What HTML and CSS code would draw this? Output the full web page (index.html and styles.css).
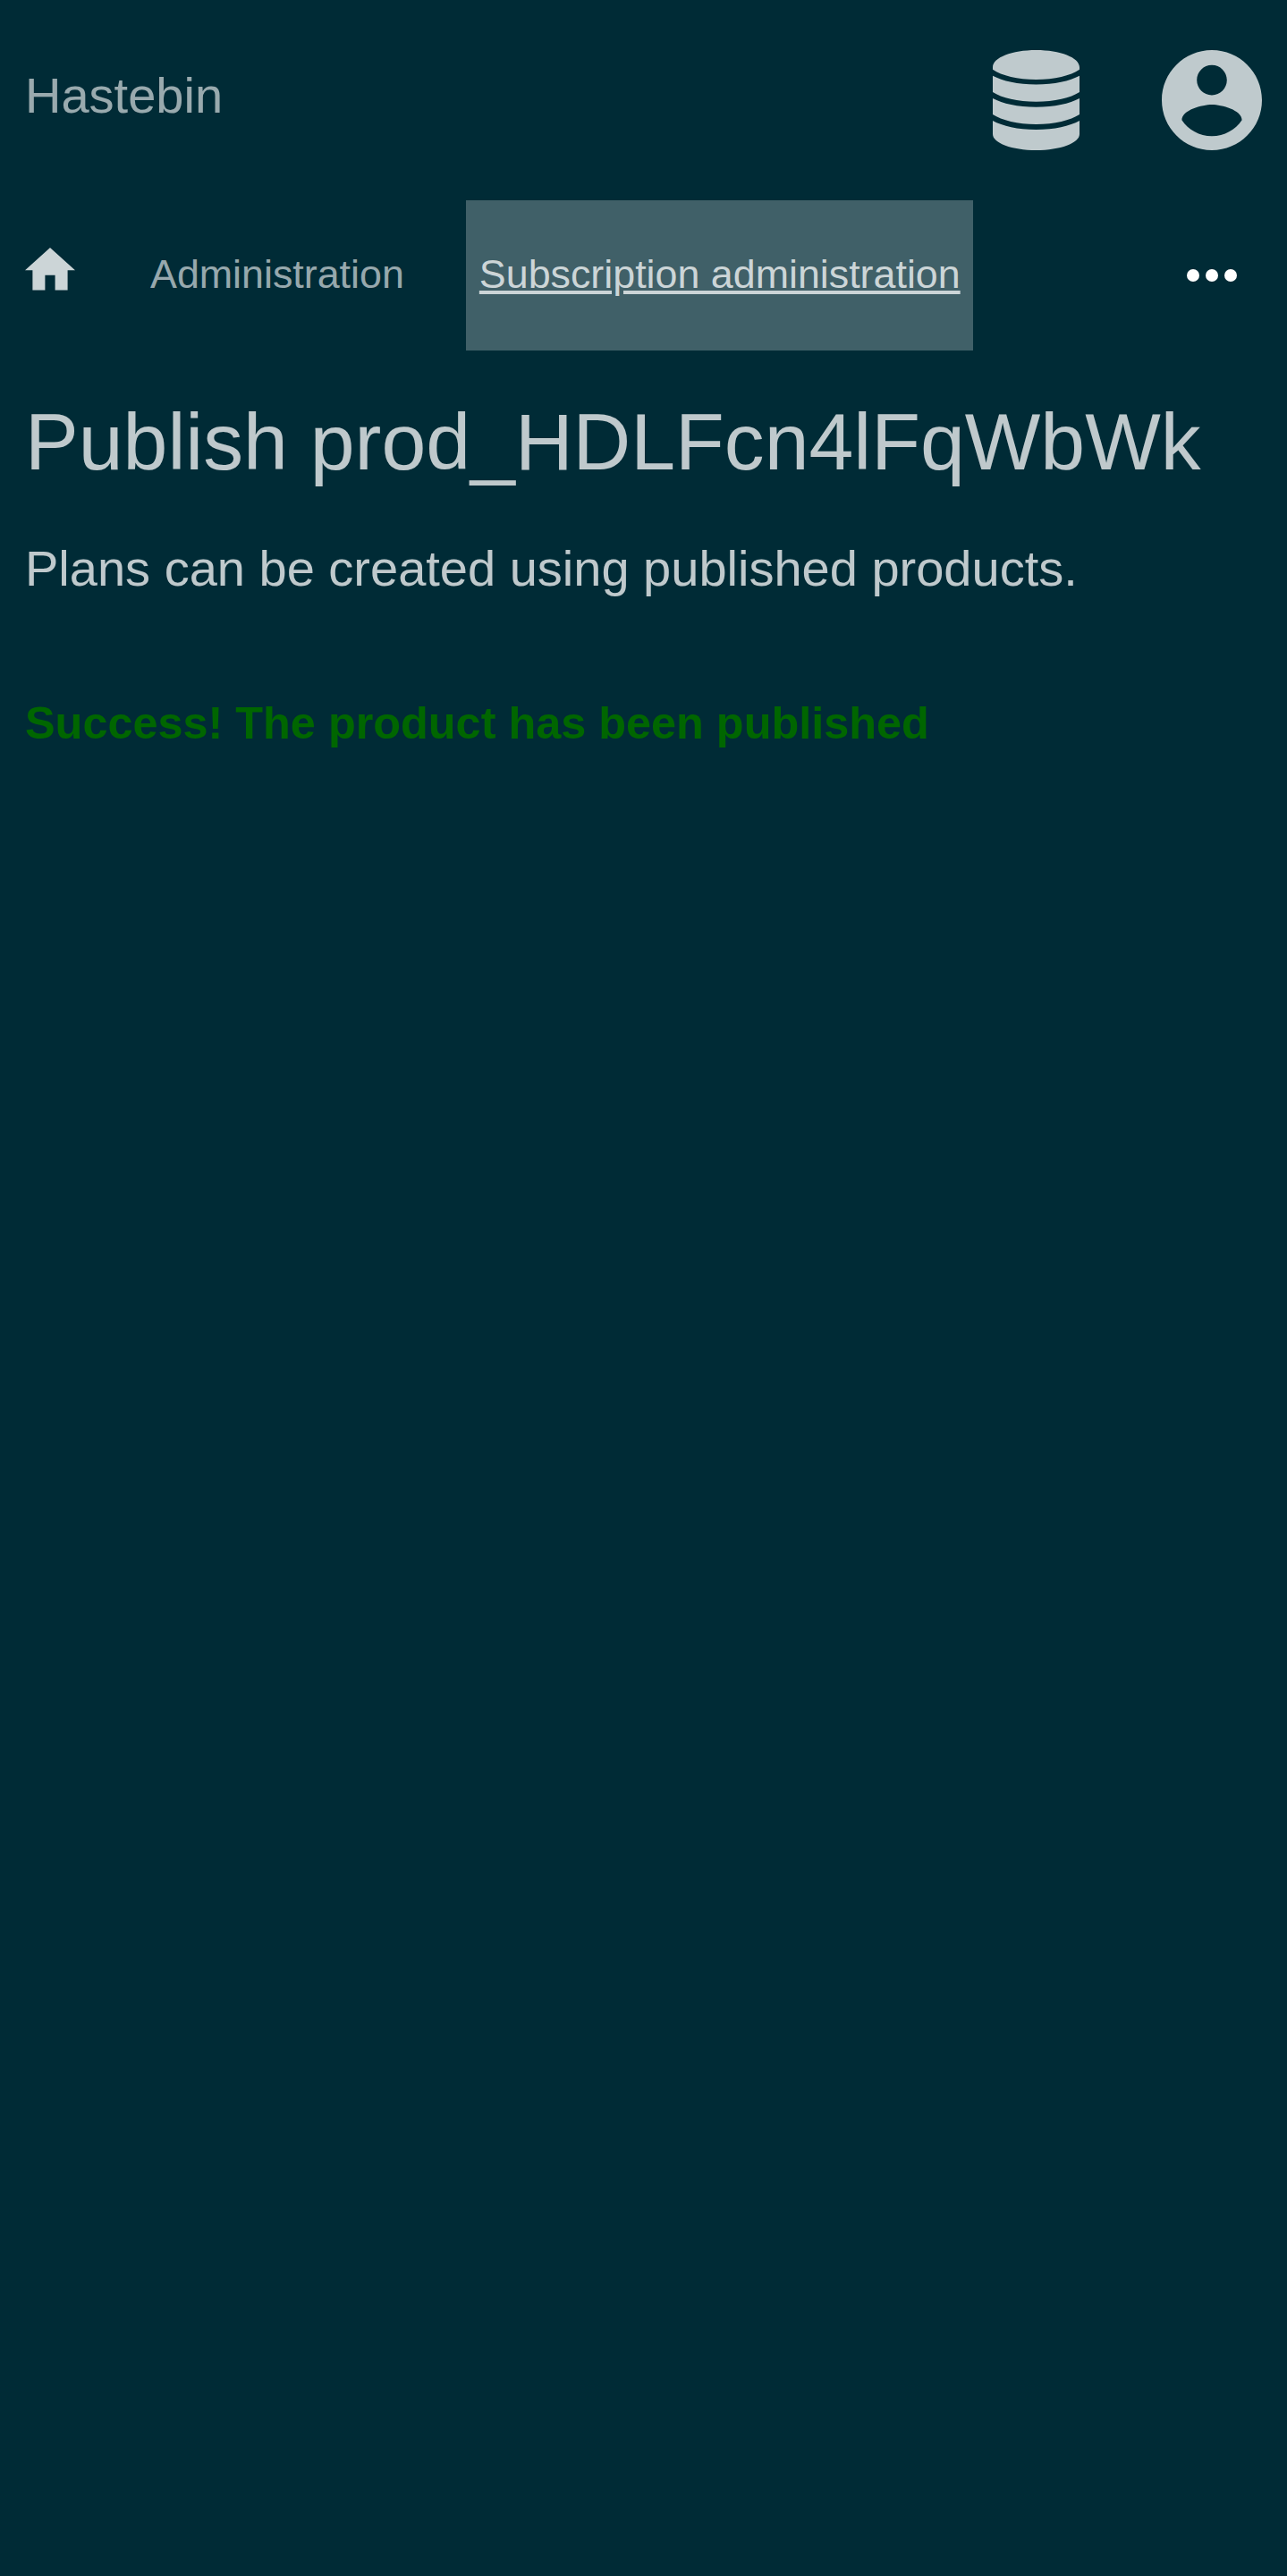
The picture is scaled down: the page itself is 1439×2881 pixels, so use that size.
FILE: index.html
```html
<!DOCTYPE html>
<html lang="en">
<head>
<meta charset="utf-8">
<title>Hastebin</title>
<link rel="stylesheet" href="styles.css">
</head>
<body>
<header class="header">
  <a class="brand">Hastebin</a>
  <div class="menus">
    <svg class="icon-db" viewBox="0 0 97 112"><path d="M48.500 0C75.500 0 97 8.500 97 19V21.700C87 28.500 69 33 48.500 33S10 28.500 0 21.700V19C0 8.500 21.500 0 48.500 0zM0 28.700C11 34.500 28 38.500 48.500 38.500S86 34.500 97 28.700V47C87 53.500 69 57.700 48.500 57.700S10 53.500 0 47zM0 54C11 59.800 28 63.800 48.500 63.800S86 59.800 97 54V72C87 78.500 69 83 48.500 83S10 78.500 0 72zM0 79C11 85 28 89 48.500 89S86 85 97 79V94C97 104 75.500 112 48.500 112S0 104 0 94z"/></svg>
    <svg class="icon-user" viewBox="2 2 20 20"><path d="M12 2C6.480 2 2 6.480 2 12s4.480 10 10 10 10-4.480 10-10S17.520 2 12 2zm0 3c1.660 0 3 1.340 3 3s-1.340 3-3 3-3-1.340-3-3 1.340-3 3-3zm0 14.200c-2.500 0-4.710-1.280-6-3.220.03-1.990 4-3.080 6-3.080 1.990 0 5.970 1.090 6 3.080-1.290 1.940-3.500 3.220-6 3.220z"/></svg>
  </div>
</header>
<nav class="nav">
  <a class="home"><svg class="icon-home" viewBox="2 3 20 17"><path d="M10 20v-6h4v6h5v-8h3L12 3 2 12h3v8z"/></svg></a>
  <a class="link">Administration</a>
  <a class="link current">Subscription administration</a>
  <svg class="icon-more" viewBox="0 0 56 14"><circle cx="7" cy="7" r="7"/><circle cx="28" cy="7" r="7"/><circle cx="49" cy="7" r="7"/></svg>
</nav>
<main class="content">
  <h1 class="title">Publish prod_HDLFcn4lFqWbWk</h1>
  <p class="intro">Plans can be created using published products.</p>
  <div class="success">Success! The product has been published</div>
</main>
</body>
</html>
```
FILE: styles.css
```css
html {
  font-size: 56px;
}

body {
  margin: 0;
  min-height: 100vh;
  background: #002b36;
  color: rgba(255, 255, 255, .75);
  font-family: "Liberation Sans", Arial, sans-serif;
}

.header {
  display: flex;
  align-items: center;
  justify-content: space-between;
  height: 4rem;
  padding: 0 .5rem;
  box-sizing: border-box;
}

.brand {
  padding-bottom: 11px;
  line-height: 63px;
  color: rgba(255, 255, 255, .6);
}

.menus {
  display: flex;
  gap: 92px;
  fill: #bfcacd;
}

.icon-db {
  width: 97px;
  height: 112px;
}

.icon-user {
  width: 112px;
  height: 112px;
}

.nav {
  display: flex;
  align-items: center;
  height: 3rem;
  padding: 0 1rem 0 .5rem;
  font-size: .8rem;
}

.home {
  display: flex;
  padding-bottom: 14px;
  margin-right: 70px;
}

.icon-home {
  width: 56px;
  height: 47.6px;
  fill: #ccd5d7;
}

.link {
  padding: 0 .25rem 4px;
  margin-right: 1rem;
  line-height: 164px;
  color: rgba(255, 255, 255, .6);
}

.current {
  margin-left: -.5px;
  padding-left: 14.5px;
  padding-right: 14.5px;
  background: rgba(255, 255, 255, .25);
  color: #ccd5d7;
  text-decoration: underline;
}

.icon-more {
  width: 56px;
  height: 14px;
  margin-left: auto;
  fill: #fff;
}

.content {
  padding: 50px .5rem 0;
}

.title {
  margin: 0;
  font-size: 1.6rem;
  font-weight: 400;
  line-height: 104px;
}

.intro {
  margin: 58px 0 0;
  line-height: 63px;
}

.success {
  margin-top: 113px;
  font-size: .9rem;
  font-weight: 700;
  line-height: 57px;
  color: #060;
}
```
